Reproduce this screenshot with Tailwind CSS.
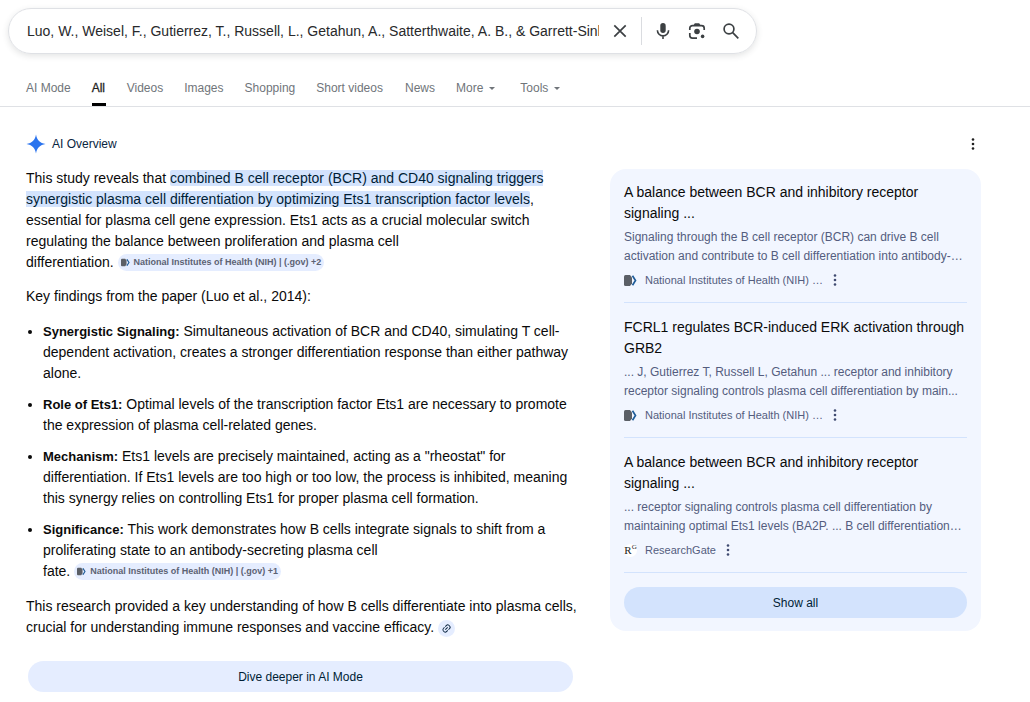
<!DOCTYPE html>
<html lang="en">
<head>
  <meta charset="UTF-8" />
  <title>Search results</title>
  <meta name="viewport" content="width=device-width, initial-scale=1.0" />
  <script src="https://cdn.jsdelivr.net/npm/@tailwindcss/browser@4"></script>
</head>
<body class="bg-white text-[#0a0a0a] font-['Liberation_Sans',Arial,sans-serif] text-sm leading-[21px]">

  <!-- Shared icons -->
  <svg class="hidden">
    <symbol id="nih" viewBox="0 0 26 24">
      <path fill="#5b5f66" d="M3 1h9l4 5v12l-4 5H3a3 3 0 0 1-3-3V4a3 3 0 0 1 3-3z" />
      <path fill="none" stroke="#1f5c99" stroke-width="3.4" d="M17 2.500l6 9.500-6 9.500" />
    </symbol>
    <symbol id="dots" viewBox="0 0 4 12">
      <circle cx="2" cy="1.5" r="1.3" />
      <circle cx="2" cy="6" r="1.3" />
      <circle cx="2" cy="10.5" r="1.3" />
    </symbol>
  </svg>

  <header class="border-b border-[#dfe1e5] pt-2">
    <form role="search" class="ml-2 flex h-[46px] w-[749px] max-w-full items-center rounded-full border border-[#dfe1e5] pl-[18px] pr-4 text-[#3c4043] shadow-[0_2px_6px_rgba(60,64,67,0.14)]">
      <input type="text" aria-label="Search" class="min-w-0 flex-1 text-sm text-[#28292b] outline-none" value="Luo, W., Weisel, F., Gutierrez, T., Russell, L., Getahun, A., Satterthwaite, A. B., &amp; Garrett-Sinha, L. A. (2014)" />
      <button type="button" aria-label="Clear" class="ml-3">
        <svg class="size-[18px]" viewBox="0 0 18 18" fill="none" stroke="currentColor" stroke-width="1.7"><path d="M3.3 3.3l11.4 11.4M14.7 3.3L3.3 14.7" /></svg>
      </button>
      <span class="ml-3 h-7 w-px bg-[#dadce0]"></span>
      <button type="button" aria-label="Search by voice" class="ml-3">
        <svg class="size-[18px]" viewBox="0 0 18 18" fill="none" stroke="currentColor" stroke-width="1.6"><rect x="6.3" y="1" width="5.4" height="10" rx="2.7" fill="currentColor" stroke="none" /><path d="M3.4 8.3a5.6 5.6 0 0 0 11.2 0M9 13.8V17" /></svg>
      </button>
      <button type="button" aria-label="Search by image" class="ml-4">
        <svg class="size-[18px]" viewBox="0 0 18 18" fill="none" stroke="currentColor" stroke-width="1.7"><path d="M1.800 8V6.300a2.600 2.600 0 0 1 2.600-2.600h9.200a2.600 2.600 0 0 1 2.600 2.600V8M1.800 11v2.600a2.600 2.600 0 0 0 2.600 2.600H9" /><path d="M5.500 3.200L6.800 1.200h4.400l1.300 2z" fill="currentColor" stroke="none" /><circle cx="9" cy="9.500" r="2.800" fill="currentColor" stroke="none" /><circle cx="14.600" cy="14.400" r="1.800" fill="currentColor" stroke="none" /></svg>
      </button>
      <button type="submit" aria-label="Search" class="ml-4">
        <svg class="size-[18px]" viewBox="0 0 18 18" fill="none" stroke="currentColor" stroke-width="1.7"><circle cx="7" cy="7" r="4.9" /><path d="M10.7 10.7l5.6 5.6" /></svg>
      </button>
    </form>

    <nav class="mt-[22px] flex gap-[21px] pl-[26px] text-xs leading-6 text-[#70757a]">
      <a href="#" class="h-[30px]">AI Mode</a>
      <a href="#" aria-current="page" class="h-[30px] min-w-[14px] border-b-3 border-black text-[#1f1f1f] [-webkit-text-stroke:0.3px]">All</a>
      <a href="#">Videos</a>
      <a href="#">Images</a>
      <a href="#">Shopping</a>
      <a href="#">Short videos</a>
      <a href="#" class="pl-px">News</a>
      <button type="button" class="flex h-6 items-center gap-1.5">More <svg class="h-[3px] w-[6px]" viewBox="0 0 6 3" fill="currentColor"><path d="M0 0h6L3 3z" /></svg></button>
      <button type="button" class="ml-1 flex h-6 items-center gap-1.5">Tools <svg class="h-[3px] w-[6px]" viewBox="0 0 6 3" fill="currentColor"><path d="M0 0h6L3 3z" /></svg></button>
    </nav>
  </header>

  <main class="max-w-[981px] pl-[26px] pt-[26px]">
    <div class="flex h-[21px] items-center">
      <svg class="size-5" viewBox="0 0 20 20"><path fill="#2b74ee" d="M10 .5C10.9 6 14 9.1 19.500 10 14 10.900 10.900 14 10 19.500 9.100 14 6 10.900.5 10 6 9.100 9.100 6 10 .5z" /></svg>
      <h1 class="ml-1.5 text-xs text-[#0a2540]">AI Overview</h1>
      <button type="button" aria-label="More options" class="ml-auto mr-1.5"><svg class="h-3 w-1 fill-[#1f1f1f]"><use href="#dots" /></svg></button>
    </div>

    <div class="flex items-start gap-[37px] pt-[14px]">
      <article class="min-w-0 flex-1">
        <p>This study reveals that <mark class="rounded-xs bg-[#d3e3fd] text-[#001d35]">combined B cell receptor (BCR) and CD40 signaling triggers synergistic plasma cell differentiation by optimizing Ets1 transcription factor levels</mark>, essential for plasma cell gene expression. Ets1 acts as a crucial molecular switch regulating the balance between proliferation and plasma cell <span class="whitespace-nowrap">differentiation.
          <button type="button" class="inline-flex h-[17px] items-center gap-1 rounded-full bg-[#e5edff] px-[3px] text-[9px] font-bold text-[#5c6273]"><svg class="size-[9px]"><use href="#nih" /></svg>National Institutes of Health (NIH) | (.gov) +2</button></span></p>
        <p class="mt-[13px]">Key findings from the paper (Luo et al., 2014):</p>
        <ul class="mt-[14px] list-disc space-y-[10px] pl-[17px]">
          <li><strong class="text-[13px]">Synergistic Signaling:</strong> Simultaneous activation of BCR and CD40, simulating T cell-dependent activation, creates a stronger differentiation response than either pathway alone.</li>
          <li><strong class="text-[13px]">Role of Ets1:</strong> Optimal levels of the transcription factor Ets1 are necessary to promote the expression of plasma cell-related genes.</li>
          <li><strong class="text-[13px]">Mechanism:</strong> Ets1 levels are precisely maintained, acting as a "rheostat" for differentiation. If Ets1 levels are too high or too low, the process is inhibited, meaning this synergy relies on controlling Ets1 for proper plasma cell formation.</li>
          <li><strong class="text-[13px]">Significance:</strong> This work demonstrates how B cells integrate signals to shift from a proliferating state to an antibody-secreting plasma cell <span class="whitespace-nowrap">fate.
            <button type="button" class="inline-flex h-[17px] items-center gap-1 rounded-full bg-[#e5edff] px-[3px] text-[9px] font-bold text-[#5c6273]"><svg class="size-[9px]"><use href="#nih" /></svg>National Institutes of Health (NIH) | (.gov) +1</button></span></li>
        </ul>
        <p class="-mr-3 mt-[14px]">This research provided a key understanding of how B cells differentiate into plasma cells, crucial for understanding immune responses and vaccine efficacy.
          <button type="button" aria-label="View related links" class="inline-flex size-[17px] items-center justify-center rounded-full bg-[#e5edff] align-middle"><svg class="size-[9px] -rotate-45" viewBox="0 0 12 12" fill="none" stroke="#0a2540" stroke-width="1.3"><path d="M5.300 3H3.500a3 3 0 0 0 0 6h1.800M6.700 3h1.800a3 3 0 0 1 0 6H6.700M3.800 6h4.400" /></svg></button></p>
        <div class="mt-[23px] pl-0.5">
          <button type="button" class="block h-[31px] w-full rounded-full bg-[#e5edff] text-xs text-[#001d35]">Dive deeper in AI Mode</button>
        </div>
      </article>

      <aside class="mt-px w-[371px] shrink-0 rounded-2xl bg-[#f2f6ff] px-[14px] py-[13px]">
        <section class="mb-[14px] border-b border-[#d3e3fd] pb-3">
          <h2><a href="#">A balance between BCR and inhibitory receptor signaling ...</a></h2>
          <p class="mt-1 text-xs leading-[19px] text-[#545d7e]">Signaling through the B cell receptor (BCR) can drive B cell activation and contribute to B cell differentiation into antibody-…</p>
          <div class="mt-1 flex h-5 items-center text-[11px] text-[#545d7e]"><svg class="mr-2 size-[13px]"><use href="#nih" /></svg>National Institutes of Health (NIH) …<button type="button" aria-label="About this result" class="ml-2.5"><svg class="h-3 w-1 fill-[#3f4a70]"><use href="#dots" /></svg></button></div>
        </section>
        <section class="mb-[14px] border-b border-[#d3e3fd] pb-3">
          <h2><a href="#">FCRL1 regulates BCR-induced ERK activation through GRB2</a></h2>
          <p class="mt-1 text-xs leading-[19px] text-[#545d7e]">... J, Gutierrez T, Russell L, Getahun ... receptor and inhibitory receptor signaling controls plasma cell differentiation by main...</p>
          <div class="mt-1 flex h-5 items-center text-[11px] text-[#545d7e]"><svg class="mr-2 size-[13px]"><use href="#nih" /></svg>National Institutes of Health (NIH) …<button type="button" aria-label="About this result" class="ml-2.5"><svg class="h-3 w-1 fill-[#3f4a70]"><use href="#dots" /></svg></button></div>
        </section>
        <section class="mb-[14px] border-b border-[#d3e3fd] pb-3">
          <h2><a href="#">A balance between BCR and inhibitory receptor signaling ...</a></h2>
          <p class="mt-1 text-xs leading-[19px] text-[#545d7e]">... receptor signaling controls plasma cell differentiation by maintaining optimal Ets1 levels (BA2P. ... B cell differentiation…</p>
          <div class="mt-1 flex h-5 items-center text-[11px] text-[#545d7e]"><span class="mr-2 flex size-[13px] items-center justify-center rounded-full bg-white font-['Liberation_Serif',serif] text-[11px] leading-none text-[#222]">R<sup class="text-[7px]">G</sup></span>ResearchGate<button type="button" aria-label="About this result" class="ml-2.5"><svg class="h-3 w-1 fill-[#3f4a70]"><use href="#dots" /></svg></button></div>
        </section>
        <button type="button" class="block h-[31px] w-full rounded-full bg-[#d3e3fd] text-xs text-[#001d35]">Show all</button>
      </aside>
    </div>
  </main>

</body>
</html>
